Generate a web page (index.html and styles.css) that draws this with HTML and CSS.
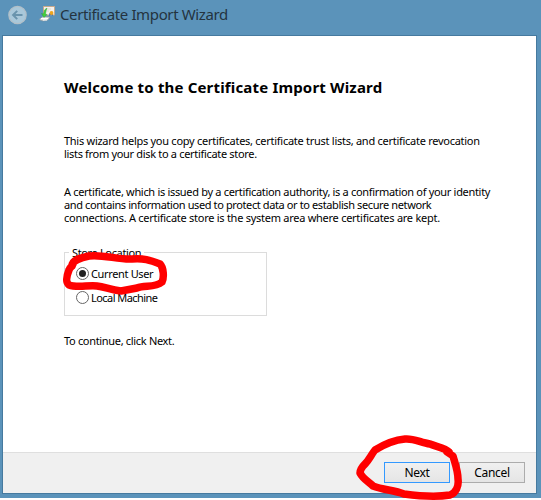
FILE: index.html
```html
<!DOCTYPE html>
<html lang="en">
<head>
<meta charset="utf-8">
<title>Certificate Import Wizard</title>
<link rel="stylesheet" href="styles.css">
</head>
<body>
<div class="window">
  <header class="titlebar">
    <svg class="back" width="20" height="20" viewBox="0 0 20 20">
      <circle cx="10.500" cy="10" r="8.700" fill="#a9c8da" stroke="#b2bfc7" stroke-width="1.200"/>
      <path d="M15.500 10H6.500M10.200 5.900 6.100 10l4.100 4.100" fill="none" stroke="#6a94ad" stroke-width="2"/>
    </svg>
    <svg class="cert" width="17" height="17" viewBox="0 0 17 17">
      <path d="M4.500 1.500H15.500V10H4.500z" fill="#f4f1ed" stroke="#c9a98b"/>
      <path d="M6 4h6M6 6h4" stroke="#ded9d2"/>
      <path d="M10.500 8 10 11l2-1 2 1-.5-3z" fill="#276bc4"/>
      <circle cx="12.500" cy="8" r="1.900" fill="#efa51d"/>
      <path d="M.5 14 4 11.500l7 .5-2 3-5 1-3-1z" fill="#d9dcdc" stroke="#8b9293" stroke-width=".6"/>
      <path d="M2 13.500h7M4 15h4" stroke="#fff"/>
      <path d="M8 3 5.500 5 4.500 9 2.500 8.500 5 12.500 8 9.500 6.500 9.300 7 6z" fill="#42d33c" stroke="#239a2e" stroke-width=".4"/>
    </svg>
    <span class="title">Certificate Import Wizard</span>
  </header>
  <main class="client">
    <section class="page">
      <h1>Welcome to the Certificate Import Wizard</h1>
      <p class="intro"><span class="l1">This wizard helps you copy certificates, certificate trust lists, and certificate revocation</span><br><span class="l2">lists from your disk to a certificate store.</span></p>
      <p class="about"><span class="l3">A certificate, which is issued by a certification authority, is a confirmation of your identity</span><br><span class="l4">and contains information used to protect data or to establish secure network</span><br><span class="l5">connections. A certificate store is the system area where certificates are kept.</span></p>
      <fieldset class="store">
        <legend>Store Location</legend>
        <label class="option"><i class="radio checked"></i><span class="l6">Current User</span></label>
        <label class="option"><i class="radio"></i><span class="l7">Local Machine</span></label>
      </fieldset>
      <p class="continue">To continue, click Next.</p>
    </section>
    <footer class="actions">
      <button class="primary">Next</button>
      <button>Cancel</button>
    </footer>
  </main>
</div>
<svg class="marks" width="541" height="500" viewBox="0 0 541 500">
  <path d="M72 266C72 260 80 258 89 256C102 254 119 260 132 259C143 258 150 260 160 264C164 268 164 278 162 282C155 288 145 285 137 288L121 291C111 290 105 287 97 286C88 285 77 288 69 285C65 282 67 275 69 270C70 267 72 267 73 264"/>
  <path d="M449 452C445 448 437 447 430 444C421 443 414 438 405 439C394 440 383 445 375 450C371 455 369 460 365 464C361 468 360 470 360 473C363 479 369 482 373 486C383 490 394 490 404 494C419 496 438 497 450 495C456 493 459 486 458 479C458 471 455 463 453 456L447 452"/>
</svg>
</body>
</html>
```

FILE: styles.css
```css
* { box-sizing: border-box; }
body {
  margin: 0;
  background: #fff;
  color: #000;
  font: 11px/13px "Noto Sans", sans-serif;
}
.window {
  width: 541px;
  height: 498px;
  padding: 0 4px 4px 2px;
  background: #5b93ba;
  display: flex;
  flex-direction: column;
}
.titlebar {
  height: 35px;
  padding-left: 5px;
  padding-top: 5px;
  display: flex;
  align-items: flex-start;
  color: #24333f;
}
.back { margin-right: 12px; }
.title {
  margin-left: 4px;
  margin-top: -1px;
  font-size: 15px;
  line-height: 20px;
  letter-spacing: -.37px;
  white-space: nowrap;
}
.client {
  flex: 1;
  border: 1px solid #467a9f;
  background: #fff;
  display: flex;
  flex-direction: column;
}
.page { flex: 1; padding: 41px 0 0 61px; white-space: nowrap; }
h1 { margin: 0; font-size: 15px; line-height: 20px; letter-spacing: .17px; }
p { margin: 0; }
.intro { margin-top: 37px; }
.about { margin-top: 25px; }
.l1 { letter-spacing: -.27px; }
.l2 { letter-spacing: -.32px; }
.l3 { letter-spacing: -.315px; }
.l4 { letter-spacing: -.39px; }
.l5 { letter-spacing: -.265px; }
.l6 { letter-spacing: -.35px; }
.l7 { letter-spacing: -.55px; }
.store {
  position: relative;
  width: 203px;
  height: 64px;
  margin: 28px 0 0;
  padding: 14px 0 0 11px;
  border: 1px solid #dcdcdc;
}
legend {
  position: absolute;
  top: -7px;
  left: 4px;
  padding: 0 3px;
  background: #fff;
  letter-spacing: -.35px;
}
.option { display: flex; align-items: center; height: 13px; margin-bottom: 11px; gap: 2px; }
.radio {
  width: 13px;
  height: 13px;
  border: 1px solid #666;
  border-radius: 50%;
  display: grid;
  place-items: center;
  background: #fff;
}
.checked::after { content: ""; width: 7px; height: 7px; border-radius: 50%; background: #222; }
.continue { margin-top: 18px; letter-spacing: -.32px; }
.actions {
  height: 41px;
  padding: 9px 11px 0 0;
  border-top: 1px solid #dfdfdf;
  background: #f0f0f0;
  display: flex;
  justify-content: flex-end;
  gap: 9px;
}
button {
  width: 66px;
  height: 21px;
  padding: 0;
  border: 1px solid #acacac;
  background: linear-gradient(#f0f0f0, #e5e5e5);
  color: #000;
  font: 12px/18px "Noto Sans", sans-serif;
  letter-spacing: -.3px;
}
.primary { border-color: #3399ff; }
.marks {
  position: absolute;
  top: 0;
  left: 0;
  fill: none;
  stroke: #f00;
  stroke-width: 7.500px;
  stroke-linecap: round;
  stroke-linejoin: round;
}
```
